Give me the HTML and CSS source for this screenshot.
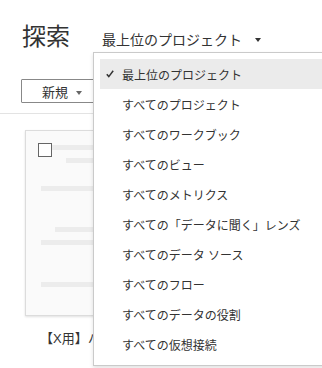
FILE: index.html
```html
<!DOCTYPE html>
<html lang="ja">
<head>
    <meta charset="UTF-8">
    <title>探索</title>
    <link rel="stylesheet" href="styles.css">
</head>
<body>
    <div class="header">
        <h1 class="title">探索</h1>
        <div class="scope">
            <span>最上位のプロジェクト</span>
            <span class="caret"></span>
        </div>
    </div>

    <div class="toolbar">
        <button class="new-btn">新規 <span class="caret small"></span></button>
    </div>

    <div class="content">
        <div class="tile">
            <div class="card">
                <div class="card-top">
                    <span class="checkbox"></span>
                    <div class="bar first"></div>
                </div>
                <div class="bar b2"></div>
                <div class="bar b3"></div>
                <div class="bar b4"></div>
                <div class="bar b5"></div>
                <div class="bar b6"></div>
            </div>
            <div class="caption">【X用】ハンドブック</div>
        </div>
    </div>

    <!-- 表示範囲のドロップダウン -->
    <ul class="menu">
        <li class="selected">
            <span class="check">
                <svg width="8" height="8" viewBox="0 0 8 8"><polyline points="0.8,4.2 2.8,6.6 7.2,0.8" fill="none" stroke="#333" stroke-width="1.5"/></svg>
            </span>最上位のプロジェクト
        </li>
        <li><span class="check"></span>すべてのプロジェクト</li>
        <li><span class="check"></span>すべてのワークブック</li>
        <li><span class="check"></span>すべてのビュー</li>
        <li><span class="check"></span>すべてのメトリクス</li>
        <li><span class="check"></span>すべての「データに聞く」レンズ</li>
        <li><span class="check"></span>すべてのデータ ソース</li>
        <li><span class="check"></span>すべてのフロー</li>
        <li><span class="check"></span>すべてのデータの役割</li>
        <li><span class="check"></span>すべての仮想接続</li>
    </ul>
</body>
</html>
```

FILE: styles.css
```css
html, body {
    overflow: hidden;
}
body {
    margin: 0;
    font-family: "Liberation Sans", "Noto Sans CJK JP", sans-serif;
    color: #333;
    background: #fff;
    position: relative;
    height: 368px;
}
.header {
    display: flex;
    align-items: baseline;
    padding: 21px 0 0 22px;
}
.title {
    margin: 0;
    font-size: 24px;
    font-weight: normal;
    line-height: 32px;
    color: #333;
}
.scope {
    display: flex;
    align-items: center;
    margin-left: 32px;
    font-size: 14px;
    line-height: 20px;
    color: #333;
}
.caret {
    display: inline-block;
    width: 0;
    height: 0;
    margin-left: 13px;
    border-left: 3.5px solid transparent;
    border-right: 3.5px solid transparent;
    border-top: 4px solid #333;
}
.caret.small {
    margin-left: 4px;
    border-left-width: 3px;
    border-right-width: 3px;
    border-top: 4px solid #666;
    vertical-align: middle;
}
.toolbar {
    padding: 26px 0 10px 21px;
    border-bottom: 1px solid #e3e3e3;
}
.new-btn {
    width: 82px;
    height: 24px;
    padding: 0 0 0 20px;
    text-align: left;
    font-family: inherit;
    font-size: 13px;
    color: #333;
    background: #fff;
    border: 1px solid #888;
    border-radius: 1px;
}
.content {
    padding: 16px 0 0 25px;
}
.tile {
    width: 200px;
}
.card {
    box-sizing: border-box;
    height: 186px;
    padding: 12px 12px 0 12px;
    background: #fafafa;
    border: 1px solid #dcdcdc;
    box-shadow: 0 1px 2px rgba(0, 0, 0, 0.12);
}
.card-top {
    display: flex;
}
.checkbox {
    box-sizing: border-box;
    width: 14px;
    height: 14px;
    border: 1px solid #666;
    background: #fff;
    flex: none;
}
.bar {
    height: 5px;
    background: #ececec;
}
.bar.first {
    flex: 1;
    margin-top: 2px;
}
.b2 { margin: 1px 0 0 28px; }
.b3 { margin: 23px 0 0 3px; }
.b4 { margin: 36px 0 0 17px; }
.b5 { margin: 8px 0 0 3px; }
.b6 { margin: 37px 0 0 3px; }
.caption {
    margin-top: 14px;
    padding-left: 15px;
    font-size: 13px;
    line-height: 18px;
    color: #333;
}
.menu {
    position: absolute;
    left: 93px;
    top: 52px;
    width: 260px;
    margin: 0;
    padding: 6px 0 6px 6px;
    list-style: none;
    background: #fff;
    border: 1px solid #cacaca;
    box-shadow: 0 2px 4px rgba(0, 0, 0, 0.12);
}
.menu li {
    display: flex;
    align-items: center;
    height: 30px;
    padding-left: 6px;
    font-size: 12px;
    color: #333;
    white-space: nowrap;
}
.menu li.selected {
    background: #ebebeb;
}
.check {
    display: inline-flex;
    width: 16px;
    flex: none;
}
```
